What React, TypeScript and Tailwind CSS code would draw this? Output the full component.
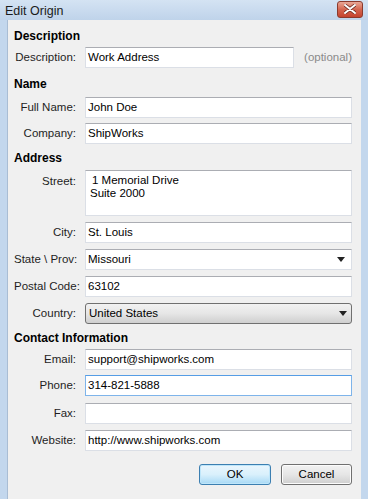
import React from "react";

const font = { fontFamily: '"Liberation Sans", Arial, sans-serif' };

const boxBase =
  "h-[21px] flex-1 min-w-0 bg-white border px-[2px] text-[11.5px] leading-[19px] text-black";
const plainBorder = "border-[#dbdfe6] border-t-[#abadb3]";
const focusBorder = "border-[#7eb4ea] border-t-[#569de5]";

function Label({ text, top = false }: { text: string; top?: boolean }) {
  return (
    <div
      className={`w-[62px] shrink-0 text-right text-[11.5px] text-[#1e1e1e] whitespace-nowrap ${
        top ? "self-start pt-[3px]" : ""
      }`}
    >
      {text}
    </div>
  );
}

function Field({
  label,
  value,
  className = "",
  focused = false,
}: {
  label: string;
  value: string;
  className?: string;
  focused?: boolean;
}) {
  return (
    <div className={`flex items-center gap-[9px] ${className}`}>
      <Label text={label} />
      <div className={`${boxBase} ${focused ? focusBorder : plainBorder}`}>{value}</div>
    </div>
  );
}

function Arrow() {
  return (
    <svg width="8" height="5" viewBox="0 0 8 5" className="mr-[4px]">
      <path d="M0 0h8L4 5z" fill="#222" />
    </svg>
  );
}

function Header({ text, className = "" }: { text: string; className?: string }) {
  return (
    <div className={`text-[12px] font-bold text-black leading-[16px] ${className}`}>
      {text}
    </div>
  );
}

export default function App() {
  return (
    <div
      className="w-[368px] h-[499px] bg-[#c3d7ed] flex flex-col overflow-hidden"
      style={font}
    >
      {/* title bar */}
      <div className="h-[20px] shrink-0 flex items-center justify-between pl-[5px] pr-[5px] bg-gradient-to-b from-[#d4e3f3] to-[#bfd3ea]">
        <span className="text-[12.5px] text-[#1b1b1b] leading-[14px] pt-[1px]">Edit Origin</span>
        <div className="w-[26px] h-[17px] -mt-[2px] rounded-[3px] border border-[#8b3a2d] bg-gradient-to-b from-[#e8a796] via-[#d4654f] to-[#c4432e] flex items-center justify-center">
          <svg width="12" height="10" viewBox="0 0 12 10">
            <path
              d="M1 1l10 8M11 1L1 9"
              stroke="#6b2a20"
              strokeWidth="3.4"
              strokeLinecap="round"
            />
            <path
              d="M1 1l10 8M11 1L1 9"
              stroke="#fff"
              strokeWidth="2"
              strokeLinecap="round"
            />
          </svg>
        </div>
      </div>

      {/* body */}
      <div className="flex-1 flex mx-[7px]">
        <div className="flex-1 bg-[#f0f0f0] border-l border-[#a9bdd4] pl-[6px] pr-[9px] pt-[8px]">
          <Header text="Description" />
          <div className="flex items-center gap-[9px] mt-[3px]">
            <Label text="Description:" />
            <div className={`${boxBase} ${plainBorder} max-w-[210px]`}>Work Address</div>
            <span className="ml-[1px] text-[11.5px] text-[#8a8a8a]">(optional)</span>
          </div>

          <Header text="Name" className="mt-[8px]" />
          <Field label="Full Name:" value="John Doe" className="mt-[5px]" />
          <Field label="Company:" value="ShipWorks" className="mt-[5px]" />

          <Header text="Address" className="mt-[6px]" />
          <div className="flex gap-[9px] mt-[4px]">
            <Label text="Street:" top />
            <div
              className={`h-[46px] flex-1 bg-white border ${plainBorder} pl-[4px] pt-[3px] text-[11.5px] leading-[13px] text-black`}
            >
              <div className="pl-[2px]">1 Memorial Drive</div>
              <div>Suite 2000</div>
            </div>
          </div>
          <Field label="City:" value="St. Louis" className="mt-[6px]" />
          <div className="flex items-center gap-[9px] mt-[6px]">
            <Label text="State \ Prov:" />
            <div className={`${boxBase} ${plainBorder} flex items-center justify-between`}>
              <span>Missouri</span>
              <Arrow />
            </div>
          </div>
          <Field label="Postal Code:" value="63102" className="mt-[6px]" />
          <div className="flex items-center gap-[9px] mt-[6px]">
            <Label text="Country:" />
            <div className="h-[21px] flex-1 rounded-[3px] border border-[#707070] bg-gradient-to-b from-[#f2f2f2] via-[#e6e6e6] to-[#cfcfcf] flex items-center justify-between pl-[3px] text-[11.5px] text-black">
              <span>United States</span>
              <Arrow />
            </div>
          </div>

          <Header text="Contact Information" className="mt-[6px]" />
          <Field label="Email:" value="support@shipworks.com" className="mt-[3px]" />
          <Field label="Phone:" value="314-821-5888" className="mt-[5px]" focused />
          <Field label="Fax:" value="" className="mt-[7px]" />
          <Field label="Website:" value="http://www.shipworks.com" className="mt-[6px]" />

          <div className="flex justify-end gap-[10px] mt-[13px]">
            <button className="w-[72px] h-[21px] rounded-[3px] border border-[#3c7fb1] bg-gradient-to-b from-[#eaf6fd] via-[#d9f0fc] to-[#a7d9f5] text-[11.5px] text-black shadow-[inset_0_0_0_1px_#bfe6fa]">
              OK
            </button>
            <button className="w-[71px] h-[21px] rounded-[3px] border border-[#707070] bg-gradient-to-b from-[#f2f2f2] via-[#e6e6e6] to-[#cfcfcf] text-[11.5px] text-black shadow-[inset_0_0_0_1px_#fcfcfc]">
              Cancel
            </button>
          </div>
        </div>
      </div>
    </div>
  );
}
